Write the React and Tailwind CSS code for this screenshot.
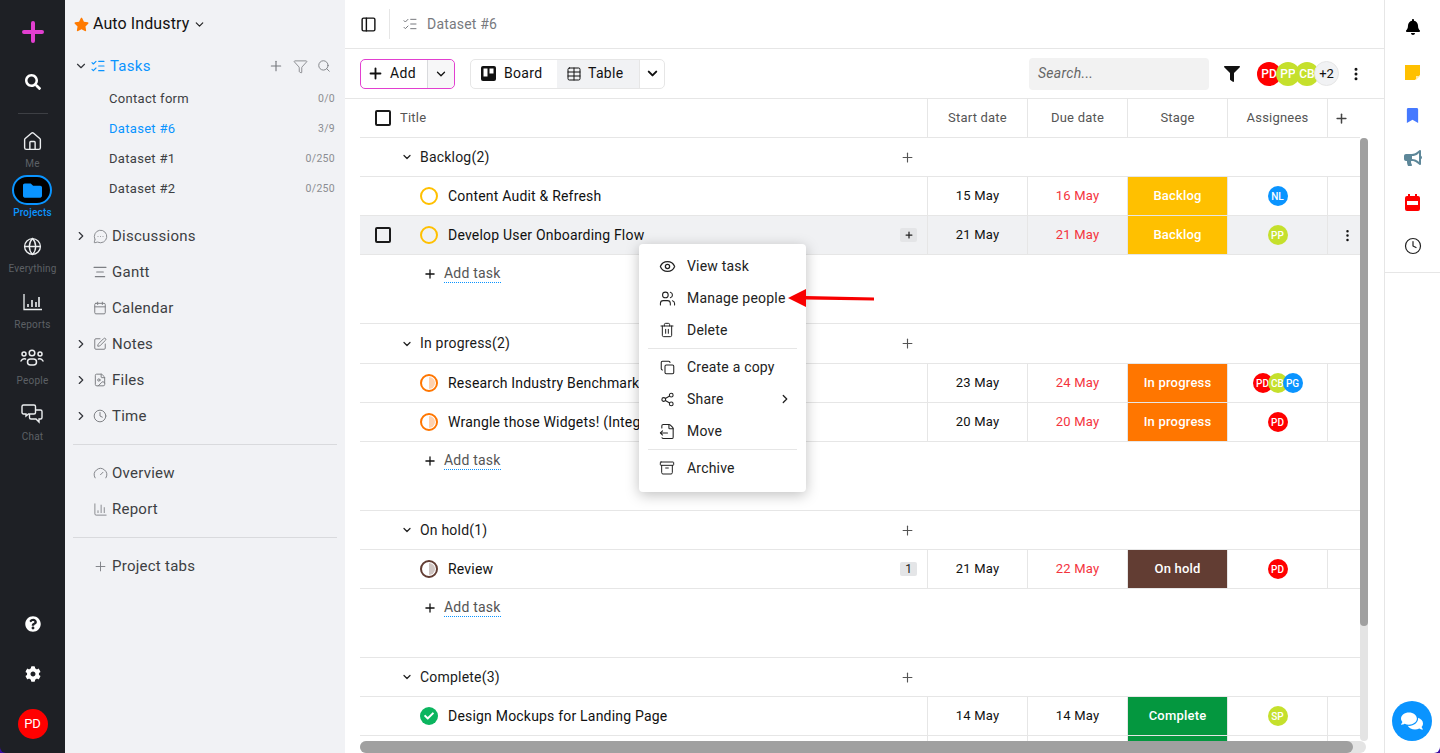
import React from 'react';
import {
  House, Globe, Plus, Search, Funnel, ChevronDown, ChevronRight, ListChecks, MessageCircleMore,
  AlignCenter, Calendar, SquarePen, FileImage, Clock, Gauge, ChartColumn, Table, Eye, Users, Trash2,
  Copy, Share2, FileOutput, Archive, EllipsisVertical, PanelLeft, MessagesSquare,
} from 'lucide-react';
import {
  FaStar, FaFolder, FaSearch, FaQuestionCircle, FaCog, FaBell, FaBookmark, FaBullhorn, FaFilter,
  FaCheck, FaComments,
} from 'react-icons/fa';

const RailItem = ({ icon, label, active }) => (
  <div className="flex flex-col items-center h-[56px]">
    {active ? (
      <div className="w-[40px] h-[30px] rounded-full border-2 border-[#0a94ff] bg-black flex items-center justify-center">
        {icon}
      </div>
    ) : (
      <div className="h-[30px] flex items-center justify-center text-[#eceef0]">{icon}</div>
    )}
    <span className={`text-[10px] leading-[14px] mt-[1px] tracking-[0.2px] ${active ? 'text-[#0a94ff] font-medium' : 'text-[#5d6065]'}`}>{label}</span>
  </div>
);

const PeopleIcon = () => (
  <svg width="24" height="18" viewBox="0 0 24 18" fill="none" stroke="currentColor" strokeWidth="1.5">
    <circle cx="12" cy="4" r="2.8" />
    <circle cx="4" cy="5" r="2" />
    <circle cx="20" cy="5" r="2" />
    <rect x="7.5" y="10" width="9" height="6" rx="3" />
    <path d="M1 12c1-2 3-2.5 4.5-2M23 12c-1-2-3-2.5-4.5-2" strokeLinecap="round" />
  </svg>
);

const ChatIcon = () => (
  <svg width="22" height="20" viewBox="0 0 22 20" fill="none" stroke="currentColor" strokeWidth="1.4">
    <path d="M2.5 1h10.5a1.5 1.5 0 0 1 1.5 1.5v6a1.5 1.5 0 0 1-1.5 1.5H7.5L5 12v-2H2.5A1.5 1.5 0 0 1 1 8.500v-6A1.500 1.500 0 0 1 2.500 1z" />
    <path d="M15 6h4.500A1.500 1.500 0 0 1 21 7.500v6a1.500 1.500 0 0 1-1.500 1.500H18v3l-3-3H10a1.500 1.500 0 0 1-1.500-1.500V10" />
  </svg>
);

const ReportsIcon = () => (
  <svg width="19" height="17" viewBox="0 0 19 17" fill="none" stroke="currentColor" strokeWidth="1.3">
    <path d="M1 0v15.500h18" />
    <path d="M5 13v-3M9 13V6M13 13V8M16 13V3" strokeWidth="1.600" />
  </svg>
);

const SideItem = ({ arrow, icon, label }) => (
  <div className="flex items-center h-[36px] pl-[9px] text-[#3d3f43]">
    <span className="w-[17px] flex justify-start">
      {arrow && <ChevronRight size={14} strokeWidth={2} className="text-[#33353a]" />}
    </span>
    <span className="w-[18px] flex justify-center text-[#7d7f84]">{icon}</span>
    <span className="ml-[3px] text-[15px] tracking-[0.25px]">{label}</span>
  </div>
);

const SubItem = ({ label, count, active }) => (
  <div className="flex items-center justify-between h-[30px] pl-[44px] pr-[10px]">
    <span className={`text-[13px] tracking-[0.3px] ${active ? 'text-[#0a94ff]' : 'text-[#3d3f43]'}`}>{label}</span>
    <span className="text-[10.500px] tracking-[0.3px] text-[#8b8d91]">{count}</span>
  </div>
);

const Avatar = ({ text, color, size = 'sm' }) => (
  <div
    className={`rounded-full flex items-center justify-center shrink-0 text-white font-medium overflow-hidden ${color} ${size === 'sm' ? 'w-[20px] h-[20px] text-[10px]' : 'w-[24px] h-[24px] text-[12px]'}`}
  >
    {text}
  </div>
);

const CheckBox = () => <div className="w-[16px] h-[16px] border-2 border-[#1a1a1a] rounded-[2px]" />;

const Status = ({ kind }) => {
  if (kind === 'done') {
    return (
      <div className="w-[18px] h-[18px] rounded-full bg-[#0bb55f] flex items-center justify-center text-white">
        <FaCheck size={10} />
      </div>
    );
  }
  if (kind === 'todo') return <div className="w-[18px] h-[18px] rounded-full border-2 border-[#ffc000]" />;
  const ring = kind === 'hold' ? 'border-[#623d33]' : 'border-[#ff7600]';
  const fill = kind === 'hold' ? 'bg-[#cfc5c2]' : 'bg-[#ffd1ad]';
  return (
    <div className={`w-[18px] h-[18px] rounded-full border-2 ${ring} flex justify-end overflow-hidden p-[1px]`}>
      <div className={`w-1/2 h-full rounded-r-full ${fill}`} />
    </div>
  );
};

const cols = 'w-[100px] shrink-0 border-l border-[#e6e6e6]';

const GroupRow = ({ label, tall }) => (
  <div className={`flex items-center border-b border-[#e6e6e6] ${tall ? 'h-[40px]' : 'h-[39px]'}`}>
    <div className="w-[567px] flex items-center pl-[41px] relative">
      <ChevronDown size={12} strokeWidth={2.500} className="text-[#222]" />
      <span className="ml-[7px] text-[14px] tracking-[0.2px] text-[#1a1a1a]">{label}</span>
      <Plus size={15} strokeWidth={1.800} className="absolute left-[540px] text-[#555]" />
    </div>
  </div>
);

const TaskRow = ({ title, status, start, due, dueColor = 'text-[#f4333d]', stage, stageColor, people, hover, badge }) => (
  <div className={`flex h-[39px] border-b border-[#e6e6e6] ${hover ? 'bg-[#f0f1f3]' : ''}`}>
    <div className="w-[567px] flex items-center relative">
      <div className="w-[46px] flex justify-center">{hover && <CheckBox />}</div>
      <div className="ml-[14px]"><Status kind={status} /></div>
      <span className="ml-[10px] text-[14px] tracking-[0.2px] text-[#111] whitespace-nowrap">{title}</span>
      {badge && (
        <div className="absolute left-[540px] top-[12px] w-[17px] h-[14px] bg-[#e4e5e7] rounded-[2px] flex items-center justify-center text-[12px] text-[#222]">
          {badge === '+' ? <Plus size={10} strokeWidth={3} /> : badge}
        </div>
      )}
    </div>
    <div className={`${cols} flex items-center justify-center text-[13px] tracking-[0.2px] text-[#111]`}>{start}</div>
    <div className={`${cols} flex items-center justify-center text-[13px] tracking-[0.2px] ${dueColor}`}>{due}</div>
    <div className={`${cols} ${stageColor} flex items-center justify-center text-[13px] font-medium tracking-[0.2px] text-white`}>{stage}</div>
    <div className={`${cols} flex items-center justify-center`}>
      <div className="flex -space-x-[5px]">{people}</div>
    </div>
    <div className={`flex-1 border-l border-[#e6e6e6] flex items-center justify-center`}>
      {hover && <EllipsisVertical size={15} className="text-[#111] ml-[6px]" />}
    </div>
  </div>
);

const AddTask = () => (
  <div className="h-[69px] border-b border-[#e6e6e6] pt-[10px] pl-[63px] flex items-start">
    <Plus size={14} strokeWidth={2.200} className="text-[#111] mt-[2px]" />
    <span className="ml-[7px] text-[14px] tracking-[0.2px] text-[#555] border-b border-dotted border-[#0a94ff] leading-[17px]">Add task</span>
  </div>
);

const MenuItem = ({ icon, label, arrow }) => (
  <div className="flex items-center h-[32px] pl-[19px] pr-[14px]">
    <span className="w-[18px] flex justify-center text-[#222]">{icon}</span>
    <span className="ml-[11px] text-[14px] tracking-[0.2px] text-[#222] flex-1 whitespace-nowrap">{label}</span>
    {arrow && <ChevronRight size={14} strokeWidth={2.200} className="text-[#222]" />}
  </div>
);

export default function App() {
  const red = 'bg-[#ff0000]';
  const lime = 'bg-[#c5e02c]';
  const blue = 'bg-[#0a94ff]';
  return (
    <div className="h-[753px] w-[1440px] flex overflow-hidden bg-[#3a0ca3] font-['Roboto',sans-serif]">
      {/* Left rail */}
      <div className="w-[65px] shrink-0 bg-[#1e2025] rounded-bl-[6px] flex flex-col items-center">
        <div className="h-[64px] flex items-center justify-center">
          <svg width="22" height="22" viewBox="0 0 22 22"><path d="M11 2v18M2 11h18" stroke="#e23fd0" strokeWidth="4" strokeLinecap="round" /></svg>
        </div>
        <div className="h-[36px] flex items-center justify-center text-white"><FaSearch size={16} /></div>
        <div className="w-[30px] border-t border-[#3d3f44] mt-[13px] mb-[12px]" />
        <div className="flex flex-col gap-[0px]">
          <RailItem icon={<House size={21} strokeWidth={1.600} />} label="Me" />
        </div>
        <div className="mt-[-7px] flex flex-col">
          <RailItem active icon={<FaFolder size={19} className="text-[#0a94ff]" />} label="Projects" />
          <RailItem icon={<Globe size={19} strokeWidth={1.700} />} label="Everything" />
          <RailItem icon={<ReportsIcon />} label="Reports" />
          <RailItem icon={<PeopleIcon />} label="People" />
          <RailItem icon={<ChatIcon />} label="Chat" />
        </div>
        <div className="mt-auto flex flex-col items-center pb-[14px]">
          <div className="h-[50px] flex items-center text-white"><FaQuestionCircle size={16} /></div>
          <div className="h-[50px] flex items-center text-white"><FaCog size={16} /></div>
          <div className="mt-[10px]"><div className="w-[30px] h-[30px] rounded-full bg-[#ff0000] text-white text-[13px] flex items-center justify-center">PD</div></div>
        </div>
      </div>

      {/* Sidebar */}
      <div className="w-[280px] shrink-0 bg-[#f1f2f5] flex flex-col">
        <div className="flex items-center h-[48px] pl-[9px]">
          <FaStar size={15} className="text-[#ff7a00]" />
          <span className="ml-[4px] text-[16px] tracking-[0.1px] text-[#111]">Auto Industry</span>
          <ChevronDown size={13} strokeWidth={2.200} className="ml-[4px] text-[#222]" />
        </div>
        <div className="flex items-center h-[36px] pl-[9px] pr-[14px] text-[#0a94ff]">
          <ChevronDown size={14} strokeWidth={2} className="text-[#33353a]" />
          <ListChecks size={16} strokeWidth={1.700} className="ml-[2px]" />
          <span className="ml-[4px] text-[15px] tracking-[0.25px]">Tasks</span>
          <div className="ml-auto flex items-center gap-[9px] text-[#77797e]">
            <Plus size={16} strokeWidth={1.700} />
            <Funnel size={15} strokeWidth={1.300} />
            <Search size={14} strokeWidth={1.500} />
          </div>
        </div>
        <SubItem label="Contact form" count="0/0" />
        <SubItem label="Dataset #6" count="3/9" active />
        <SubItem label="Dataset #1" count="0/250" />
        <SubItem label="Dataset #2" count="0/250" />
        <div className="h-[14px]" />
        <SideItem arrow icon={<MessageCircleMore size={15} strokeWidth={1.400} />} label="Discussions" />
        <SideItem icon={<AlignCenter size={16} strokeWidth={1.700} />} label="Gantt" />
        <SideItem icon={<Calendar size={14} strokeWidth={1.700} />} label="Calendar" />
        <SideItem arrow icon={<SquarePen size={14} strokeWidth={1.700} />} label="Notes" />
        <SideItem arrow icon={<FileImage size={14} strokeWidth={1.700} />} label="Files" />
        <SideItem arrow icon={<Clock size={14} strokeWidth={1.700} />} label="Time" />
        <div className="mx-[8px] mt-[10px] mb-[10px] border-t border-[#d9dadd]" />
        <SideItem icon={<Gauge size={15} strokeWidth={1.500} />} label="Overview" />
        <SideItem icon={<ChartColumn size={15} strokeWidth={1.400} />} label="Report" />
        <div className="mx-[8px] mt-[10px] mb-[10px] border-t border-[#d9dadd]" />
        <SideItem icon={<Plus size={15} strokeWidth={1.500} />} label="Project tabs" />
      </div>

      {/* Main */}
      <div className="w-[1039px] shrink-0 bg-white flex flex-col relative">
        <div className="h-[49px] shrink-0 border-b border-[#e6e6e6] flex items-center pl-[15px]">
          <PanelLeft size={17} strokeWidth={2} className="text-[#111]" />
          <div className="h-[30px] border-l border-[#e6e6e6] ml-[12px]" />
          <ListChecks size={16} strokeWidth={1.500} className="ml-[12px] text-[#77797e]" />
          <span className="ml-[9px] text-[14px] tracking-[0.2px] text-[#77797e]">Dataset #6</span>
        </div>

        <div className="h-[50px] shrink-0 border-b border-[#e6e6e6] flex items-center pl-[15px] pr-[20px]">
          <div className="h-[30px] w-[95px] rounded-[5px] border border-[#e23fd0] flex items-center">
            <div className="flex items-center flex-1 pl-[6px]">
              <Plus size={17} strokeWidth={2.600} className="text-[#111]" />
              <span className="ml-[6px] text-[14px] tracking-[0.3px] text-[#111]">Add</span>
            </div>
            <div className="w-[27px] h-full border-l border-[#d9dadd] bg-[#f7f7f8] rounded-r-[5px] flex items-center justify-center">
              <ChevronDown size={14} strokeWidth={2.200} className="text-[#111]" />
            </div>
          </div>
          <div className="ml-[15px] h-[30px] w-[195px] rounded-[5px] border border-[#e6e6e6] flex items-center overflow-hidden">
            <div className="w-[86px] flex items-center pl-[10px] h-full">
              <svg width="15" height="15" viewBox="0 0 15 15"><rect width="15" height="15" rx="2" fill="#111" /><rect x="2.500" y="2.500" width="4" height="8" fill="#fff" /><rect x="8.500" y="2.500" width="4" height="5" fill="#fff" /></svg>
              <span className="ml-[8px] text-[14px] tracking-[0.3px] text-[#111]">Board</span>
            </div>
            <div className="w-[82px] flex items-center pl-[9px] h-full bg-[#f1f2f4]">
              <Table size={16} strokeWidth={1.500} className="text-[#111]" />
              <span className="ml-[6px] text-[14px] tracking-[0.3px] text-[#111]">Table</span>
            </div>
            <div className="flex-1 h-full border-l border-[#e6e6e6] flex items-center justify-center">
              <ChevronDown size={15} strokeWidth={3.200} className="text-[#111]" />
            </div>
          </div>
          <div className="ml-auto w-[180px] h-[32px] rounded-[4px] bg-[#f2f2f2] flex items-center pl-[9px] text-[14px] italic tracking-[0.3px] text-[#666]">Search...</div>
          <FaFilter size={16} className="ml-[15px] text-[#111]" />
          <div className="ml-[17px] flex items-center -space-x-[5px]">
            <Avatar text="PD" color={red} size="lg" />
            <Avatar text="PP" color={lime} size="lg" />
            <Avatar text="CB" color={lime} size="lg" />
            <div className="w-[25px] h-[25px] rounded-full bg-[#f1f2f4] border border-[#e6e6e6] relative flex items-center justify-center text-[13px] text-[#111]">+2</div>
          </div>
          <EllipsisVertical size={16} strokeWidth={2.500} className="ml-[9px] text-[#111]" />
        </div>

        {/* Table */}
        <div className="flex-1 overflow-hidden ml-[15px] mr-[24px]">
          <div className="flex h-[39px] border-b border-[#e6e6e6] text-[13px] tracking-[0.2px] text-[#555]">
            <div className="w-[567px] flex items-center">
              <div className="w-[46px] flex justify-center"><CheckBox /></div>
              <span className="-ml-[6px]">Title</span>
            </div>
            <div className={`${cols} flex items-center justify-center`}>Start date</div>
            <div className={`${cols} flex items-center justify-center`}>Due date</div>
            <div className={`${cols} flex items-center justify-center`}>Stage</div>
            <div className={`${cols} flex items-center justify-center`}>Assignees</div>
            <div className="flex-1 border-l border-[#e6e6e6] flex items-center pl-[6px]">
              <Plus size={15} strokeWidth={2.400} className="text-[#444]" />
            </div>
          </div>

          <GroupRow label="Backlog(2)" />
          <TaskRow title="Content Audit & Refresh" status="todo" start="15 May" due="16 May" stage="Backlog" stageColor="bg-[#ffc000]" people={<Avatar text="NL" color={blue} />} />
          <TaskRow hover badge="+" title="Develop User Onboarding Flow" status="todo" start="21 May" due="21 May" stage="Backlog" stageColor="bg-[#ffc000]" people={<Avatar text="PP" color={lime} />} />
          <AddTask />

          <GroupRow tall label="In progress(2)" />
          <TaskRow title="Research Industry Benchmarks" status="prog" start="23 May" due="24 May" stage="In progress" stageColor="bg-[#ff7600]" people={<><Avatar text="PD" color={red} /><Avatar text="CB" color={lime} /><Avatar text="PG" color={blue} /></>} />
          <TaskRow title="Wrangle those Widgets! (Integration)" status="prog" start="20 May" due="20 May" stage="In progress" stageColor="bg-[#ff7600]" people={<Avatar text="PD" color={red} />} />
          <AddTask />

          <GroupRow label="On hold(1)" />
          <TaskRow badge="1" title="Review" status="hold" start="21 May" due="22 May" stage="On hold" stageColor="bg-[#623d33]" people={<Avatar text="PD" color={red} />} />
          <AddTask />

          <GroupRow label="Complete(3)" />
          <TaskRow title="Design Mockups for Landing Page" status="done" start="14 May" due="14 May" dueColor="text-[#111]" stage="Complete" stageColor="bg-[#04973f]" people={<Avatar text="SP" color={lime} />} />
          <TaskRow title="" status="done" start="" due="" stage="" stageColor="bg-[#04973f]" />
        </div>

        {/* Scrollbars */}
        <div className="absolute left-[1015px] top-[138px] w-[8px] h-[603px] rounded-full bg-[#e4e4e4]">
          <div className="w-full h-[488px] rounded-full bg-[#a0a0a0]" />
        </div>
        <div className="absolute left-[15px] top-[741px] w-[1006px] h-[12px] rounded-full bg-[#e4e4e4]">
          <div className="w-[993px] h-full rounded-full bg-[#a0a0a0]" />
        </div>

        {/* Context menu */}
        <div className="absolute left-[294px] top-[244px] w-[167px] h-[248px] bg-white rounded-[4px] shadow-[0_3px_14px_rgba(0,0,0,0.25)] pt-[6px]">
          <MenuItem icon={<Eye size={17} strokeWidth={1.800} />} label="View task" />
          <MenuItem icon={<Users size={17} strokeWidth={1.500} />} label="Manage people" />
          <MenuItem icon={<Trash2 size={16} strokeWidth={1.500} />} label="Delete" />
          <div className="mx-[9px] my-[2px] border-t border-[#e6e6e6]" />
          <MenuItem icon={<Copy size={15} strokeWidth={1.700} />} label="Create a copy" />
          <MenuItem arrow icon={<Share2 size={15} strokeWidth={1.700} />} label="Share" />
          <MenuItem icon={<FileOutput size={17} strokeWidth={1.500} />} label="Move" />
          <div className="mx-[9px] my-[2px] border-t border-[#e6e6e6]" />
          <MenuItem icon={<Archive size={16} strokeWidth={1.500} />} label="Archive" />
        </div>

        {/* Red annotation arrow */}
        <svg className="absolute left-[442px] top-[288px]" width="88" height="20" viewBox="0 0 88 20">
          <path d="M1 10L19 1v7l68 1.500v3L19 11.500V19z" fill="#f80000" />
        </svg>
      </div>

      {/* Right rail */}
      <div className="w-[56px] shrink-0 bg-white border-l border-[#e6e6e6] rounded-br-[6px] flex flex-col items-center relative">
        <div className="h-[54px] flex items-center text-black"><FaBell size={16} /></div>
        <div className="h-[36px] flex items-center">
          <svg width="15" height="15" viewBox="0 0 15 15"><path d="M0 0h15v10l-5 5H0z" fill="#ffc000" /><path d="M11 11h4l-4 4z" fill="#ffe9a6" /></svg>
        </div>
        <div className="h-[50px] flex items-center text-[#4579ff]"><FaBookmark size={15} /></div>
        <div className="h-[36px] flex items-center text-[#5d8799]"><FaBullhorn size={18} /></div>
        <div className="h-[52px] flex items-center">
          <svg width="15" height="17" viewBox="0 0 15 17">
            <path d="M3 0h2v3H3zM10 0h2v3h-2z" fill="#f00" />
            <rect y="2" width="15" height="15" rx="2" fill="#f00" />
            <rect x="2" y="7" width="11" height="4" fill="#fff" />
          </svg>
        </div>
        <div className="h-[36px] flex items-center text-[#222]"><Clock size={18} strokeWidth={1.600} /></div>
        <div className="w-full border-t border-[#e6e6e6] mt-[8px]" />
        <div className="absolute left-[7px] top-[701px] w-[40px] h-[40px] rounded-full bg-[#0a94ff] flex items-center justify-center text-white">
          <FaComments size={22} />
        </div>
      </div>
    </div>
  );
}
